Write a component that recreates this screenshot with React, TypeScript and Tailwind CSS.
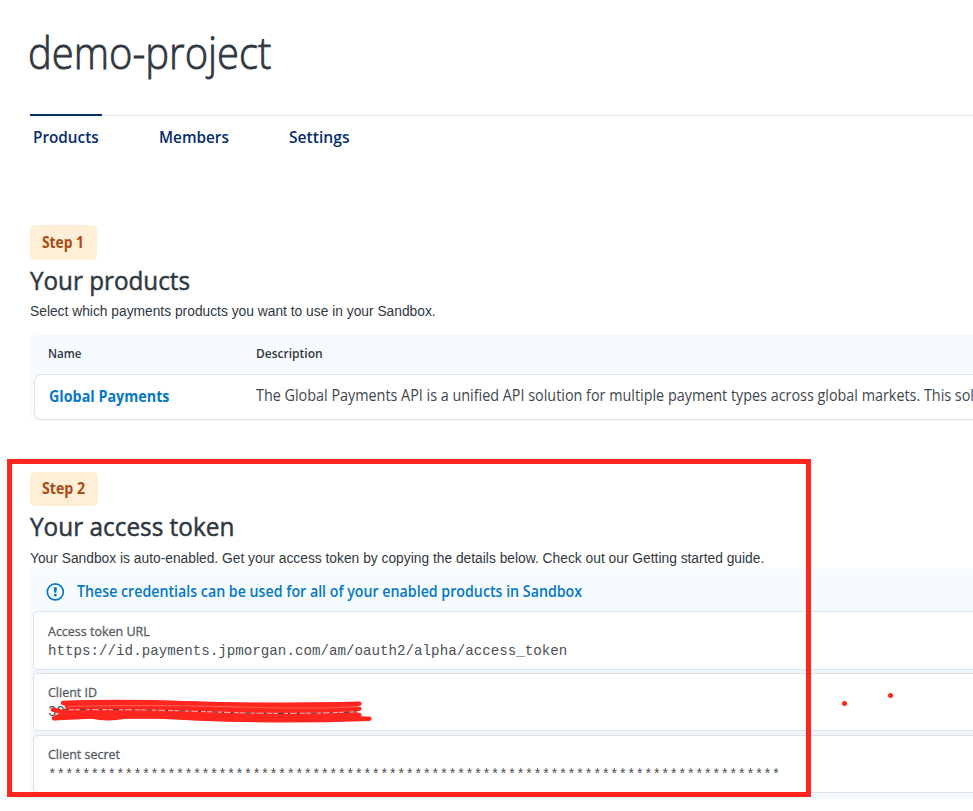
import type { ReactNode } from "react";

const brand = "font-['Open_Sans','Noto_Sans',sans-serif]";

function Label({ className, children }: { className: string; children: ReactNode }) {
  return <span className={`inline-block origin-left whitespace-nowrap ${brand} ${className}`}>{children}</span>;
}

function Field({ label, className, children }: { label: ReactNode; className: string; children: ReactNode }) {
  return (
    <div className={`flex flex-col rounded-l-[5px] border border-r-0 border-[#dde4e9] bg-white pl-[14px] ${className}`}>
      <div className="flex h-[21px] shrink-0 items-center">{label}</div>
      <div className="relative flex h-[22px] shrink-0 items-center whitespace-nowrap font-['Liberation_Mono',monospace] text-[14.2px] text-[#4b5156]">
        {children}
      </div>
    </div>
  );
}

function FieldLabel({ children }: { children: ReactNode }) {
  return (
    <Label className="scale-x-[0.96] text-[13px] leading-[18px] text-[#555b60] [-webkit-text-stroke:0.3px_#555b60]">
      {children}
    </Label>
  );
}

export default function App() {
  return (
    <div className="relative h-[811px] w-[973px] overflow-hidden bg-white pl-[30px] text-[#30383f]">
      <h1 className="flex h-[114px] items-start pt-[22px]">
        <Label className="-ml-[2px] scale-x-[0.908] text-[44px] leading-[61px] font-light [-webkit-text-stroke:0.8px_#30383f]">demo-project</Label>
      </h1>
      <nav className="flex h-[46px] items-start text-[#052d6b]">
        <div className="flex h-full w-[72px] flex-col border-t-2 border-[#052d6b] pt-[9px] pl-[3px]">
          <Label className="scale-x-[0.9] text-[17px] leading-6 font-semibold">Products</Label>
        </div>
        <div className="mt-px flex h-full flex-1 border-t border-[#e9eaec] pt-[9px]">
          <div className="w-[130px] pl-[57px]">
            <Label className="scale-x-[0.9] text-[17px] leading-6 font-semibold">Members</Label>
          </div>
          <div className="pl-[57px]">
            <Label className="scale-x-[0.92] text-[17px] leading-6 font-semibold">Settings</Label>
          </div>
        </div>
      </nav>

      <section className="pt-[65px]">
        <div className="flex h-[35px] w-[67px] items-center rounded-[5px] bg-[#ffefd6] pb-px pl-3 text-[#aa4b12]">
          <Label className="scale-x-[0.862] text-[16px] leading-5 font-bold">Step 1</Label>
        </div>
        <h2 className="flex h-[42px] items-center pb-[2px]">
          <Label className="scale-x-[0.932] text-[26px] leading-9 [-webkit-text-stroke:0.5px_#30383f]">Your products</Label>
        </h2>
        <p className="flex h-[19px] items-center pt-px whitespace-nowrap font-['Liberation_Sans',sans-serif] text-[13.8px]">
          Select which payments products you want to use in your Sandbox.
        </p>
        <div className="mt-[13px] h-[87px] rounded-l-[6px] bg-[#f6fbff] pl-1">
          <div className="flex h-10 items-center pb-[2px] pl-[14px]">
            <div className="flex w-[208px]"><Label className="scale-x-[0.89] text-[13px] leading-5 font-semibold">Name</Label></div>
            <Label className="scale-x-[0.925] text-[13px] leading-5 font-semibold">Description</Label>
          </div>
          <div className="flex h-[46px] items-center rounded-l-[7px] border border-r-0 border-[#dde5eb] bg-white pl-[14px]">
            <div className="flex w-[207px] shrink-0 pb-[3px] text-[#0578c5]">
              <Label className="scale-x-[0.895] text-[16px] leading-6 font-bold">Global Payments</Label>
            </div>
            <Label className="mb-1 scale-x-[0.898] text-[16px] leading-6 text-[#40474d]">
              The Global Payments API is a unified API solution for multiple payment types across global markets. This sol
            </Label>
          </div>
        </div>
      </section>

      <section className="pt-[51px]">
        <div className="flex h-[34px] w-[68px] items-center rounded-[5px] bg-[#ffefd6] pb-[2px] pl-3 text-[#aa4b12]">
          <Label className="scale-x-[0.885] text-[16px] leading-5 font-bold">Step 2</Label>
        </div>
        <h2 className="flex h-[42px] items-center pb-[2px]">
          <Label className="scale-x-[0.937] text-[26px] leading-9 [-webkit-text-stroke:0.5px_#30383f]">Your access token</Label>
        </h2>
        <p className="flex h-[21px] items-center pt-px whitespace-nowrap font-['Liberation_Sans',sans-serif] text-[13.8px]">
          Your Sandbox is auto-enabled. Get your access token by copying the details below. Check out our Getting started guide.
        </p>
        <div className="h-[230px] bg-[#f3f9fd] pl-[3px]">
          <div className="-ml-[3px] flex h-[42px] items-center bg-[#f6fbff] pt-[3px] pl-4 text-[#0578c5]">
            <svg className="mr-3 shrink-0" width="19" height="19" viewBox="0 0 19 19" fill="none">
              <circle cx="9.3" cy="9.9" r="8" stroke="currentColor" strokeWidth="1.7" />
              <path d="M7.7 5.2h3.2l-.6 5.6h-2z" fill="currentColor" />
              <circle cx="9.3" cy="13.2" r="1.4" fill="currentColor" />
            </svg>
            <Label className="mb-[2px] scale-x-[0.888] text-[16px] leading-6 font-semibold">
              These credentials can be used for all of your enabled products in Sandbox
            </Label>
          </div>
          <div className="flex flex-col bg-[#eff5fa]">
            <Field className="h-[59px] pt-[8px]" label={<FieldLabel>Access token URL</FieldLabel>}>
              https://id.payments.jpmorgan.com/am/oauth2/alpha/access_token
            </Field>
            <Field className="mt-[3px] h-[58px] pt-[7px]" label={<FieldLabel>Client ID</FieldLabel>}>
              <span>39</span>
              <svg className="absolute -top-[3px] left-0" width="330" height="26" viewBox="48 699 330 26" fill="none" stroke="#ff261f" strokeLinecap="round" strokeLinejoin="round">
                <path d="M62 702L120 700.5L180 701L250 702.7L358 702.5V716L368 717V720L290 722L210 721L160 718L124 719Q108 722 90 718.5L60 718L68 714L60 711L66 708Z" fill="#ff261f" stroke="none" />
                <path d="M63 703C130 700 170 703 225 704.5Q300 705.5 359.5 703.8" strokeWidth="4.4" />
                <path d="M53 709.7L66 713L54 718.3Q130 713.5 200 718.5Q280 722 369.5 718.7" strokeWidth="4.4" />
                <path d="M300 709.5L359.5 708.8M300 715.5L359.5 714.8" strokeWidth="4.2" />
                <path d="M66 709.8Q145 709 215 712T358 711.8" stroke="#ffaaa6" strokeWidth="1" strokeLinecap="butt" />
                <path d="M66 709.8Q145 709 215 712T358 711.8" stroke="#6b3439" strokeWidth="1.2" strokeDasharray="3 5 1 5 6 4 2 7" strokeLinecap="butt" />
                <path d="M68 706.3Q160 704.5 240 707T358 706.4" stroke="#ff8a85" strokeWidth=".6" />
              </svg>
            </Field>
            <Field className="mt-1 h-[58px] pt-[7px]" label={<FieldLabel>Client secret</FieldLabel>}>
              <span className="mt-[2px]">{"*".repeat(86)}</span>
            </Field>
          </div>
        </div>
      </section>

      <div className="pointer-events-none absolute top-[459px] left-[7px] h-[338px] w-[804px] border-[5px] border-[#ff261f]" />
      <div className="absolute top-[701px] left-[842px] h-[5px] w-[5px] rounded-full bg-[#ff261f]" />
      <div className="absolute top-[693px] left-[888px] h-[5px] w-[5px] rounded-full bg-[#ff261f]" />
    </div>
  );
}
